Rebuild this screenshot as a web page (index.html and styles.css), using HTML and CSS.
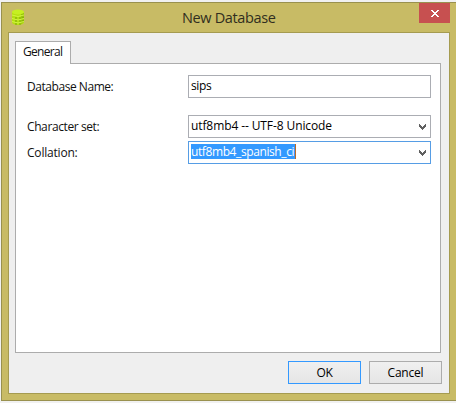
FILE: index.html
```html
<!DOCTYPE html>
<html lang="en">
<head>
<meta charset="utf-8">
<title>New Database</title>
<link rel="stylesheet" href="styles.css">
</head>
<body>
<main class="window">
  <header class="titlebar">
    <svg class="app-icon" width="14" height="16" viewBox="0 0 14 16">
      <path d="M1 3v10c0 4 12 4 12 0V3z" fill="#b5e010"/>
      <path d="M10 4h3v9l-3 2z" fill="#98c40a"/>
      <ellipse cx="7" cy="3" rx="6" ry="2.5" fill="#c6ef22"/>
      <path d="M1 6q6 3 12 0M1 9.500q6 3 12 0M1 12.500q6 3 12 0" fill="none" stroke="#d6f648" stroke-width=".9"/>
      <path d="M4 9h2M8 9h2M11.500 8.500h1M4 12h2M8 12h2M11.500 11.500h1M4 15h2M8 15h2" stroke="#7ba506" stroke-width="1"/>
    </svg>
    <h1 class="title">New Database</h1>
    <button class="close" aria-label="Close">
      <svg width="8" height="7" viewBox="0 0 8 7" shape-rendering="crispEdges"><path fill="#fff" d="M0 0h2v1h1v1h2V1h1V0h2v1H7v1H6v1H5v1h1v1h1v1h1v1H6V6H5V5H3v1H2v1H0V6h1V5h1V4h1V3H2V2H1V1H0z"/></svg>
    </button>
  </header>
  <section class="client">
    <div class="tabs"><div class="tab"><span class="t-general">General</span></div></div>
    <div class="panel">
      <div class="row row-name"><label class="t-name">Database Name:</label><div class="field"><span class="t-sips">sips</span></div></div>
      <div class="row row-charset"><label class="t-charset">Character set:</label><div class="field"><span class="t-utf">utf8mb4 -- UTF-8 Unicode</span>
        <svg class="arrow" width="7" height="6" viewBox="0 0 7 6" shape-rendering="crispEdges"><path fill="#606060" d="M0 0h1v1h1v1h1v1h1V2h1V1h1V0h1v3H6v1H5v1H4v1H3V5H2V4H1V3H0z"/></svg></div></div>
      <div class="row"><label class="t-collation">Collation:</label><div class="field focused"><span class="selection"><span class="t-selected">utf8mb4_spanish_ci</span></span>
        <svg class="arrow" width="7" height="6" viewBox="0 0 7 6" shape-rendering="crispEdges"><path fill="#606060" d="M0 0h1v1h1v1h1v1h1V2h1V1h1V0h1v3H6v1H5v1H4v1H3V5H2V4H1V3H0z"/></svg></div></div>
    </div>
    <footer class="actions">
      <button class="button primary"><span class="t-ok">OK</span></button>
      <button class="button"><span class="t-cancel">Cancel</span></button>
    </footer>
  </section>
</main>
</body>
</html>
```
FILE: styles.css
```css
* { box-sizing: border-box; }
body {
  margin: 0;
  padding: 2px 0 2px 1px;
  height: 403px;
  overflow: hidden;
  background: #f1f1f1;
  color: #111;
  font: 12px/16px "Open Sans", "Noto Sans", sans-serif;
}
.window {
  height: 399px;
  border: 1px solid #99914f;
  border-right: 0;
  background: #c8bb65;
  padding: 0 6px 7px;
}
.titlebar {
  height: 29px;
  display: grid;
  grid-template-columns: 174px 1fr 31px;
}
.app-icon { margin: 6px 0 0 3px; }
.title {
  margin: 4px 0 0;
  font-size: 14.5px;
  line-height: 22px;
  font-weight: 400;
  color: #302e20;
  white-space: nowrap;
  letter-spacing: -0.35px;
}
.close {
  width: 31px;
  height: 20px;
  border: 0;
  padding: 0 0 0 1px;
  background: #c75050;
  display: flex;
  align-items: center;
  justify-content: center;
}
.client {
  width: 442px;
  height: 362px;
  border: 1px solid #a59b50;
  background: #efefef;
  padding: 8px 8px 0 6px;
}
.tabs { height: 22px; }
.tab {
  width: 56px;
  height: 23px;
  position: relative;
  border: 1px solid #acacac;
  border-bottom: 0;
  background: #fff;
  padding: 2px 0 0 7px;
}
.panel {
  width: 426px;
  height: 290px;
  border: 1px solid #acacac;
  background: #fff;
  padding: 11px 9px 0 11px;
}
.row {
  display: grid;
  grid-template-columns: 161px 243px;
  height: 23px;
  align-items: center;
}
.row-name { margin-bottom: 17px; }
.row-charset { margin-bottom: 3px; }
.field {
  height: 23px;
  border: 1px solid #abadb3;
  padding: 0 4px 2px 2px;
  display: flex;
  align-items: center;
  justify-content: space-between;
  background: #fff;
  color: #000;
}
.focused { border-color: #569de5; }
.selection {
  background: #3399ff;
  color: #fff;
  height: 15px;
  width: 105px;
  border-right: 1px solid #b96b28;
  padding-top: 1px;
  display: flex;
  align-items: center;
}
.arrow { margin-top: 3px; }
.actions {
  display: flex;
  justify-content: flex-end;
  gap: 8px;
  padding-top: 8px;
  margin-right: -1px;
}
.button {
  appearance: none;
  width: 73px;
  height: 23px;
  border: 1px solid #acacac;
  background: linear-gradient(#f0f0f0, #e5e5e5);
  padding: 0;
  font: inherit;
  color: #000;
}
.button.primary { border: 1px solid #3399ff; }
span, label { white-space: nowrap; }
.t-general { letter-spacing: -0.7px; }
.t-name { letter-spacing: -0.45px; }
.t-charset { letter-spacing: -0.4px; }
.t-collation { letter-spacing: -0.2px; }
.t-sips { letter-spacing: -0.4px; }
.t-utf { letter-spacing: -0.1px; }
.t-selected { letter-spacing: -0.4px; }
.t-ok { letter-spacing: -0.4px; }
.t-cancel { letter-spacing: -0.2px; }
```
